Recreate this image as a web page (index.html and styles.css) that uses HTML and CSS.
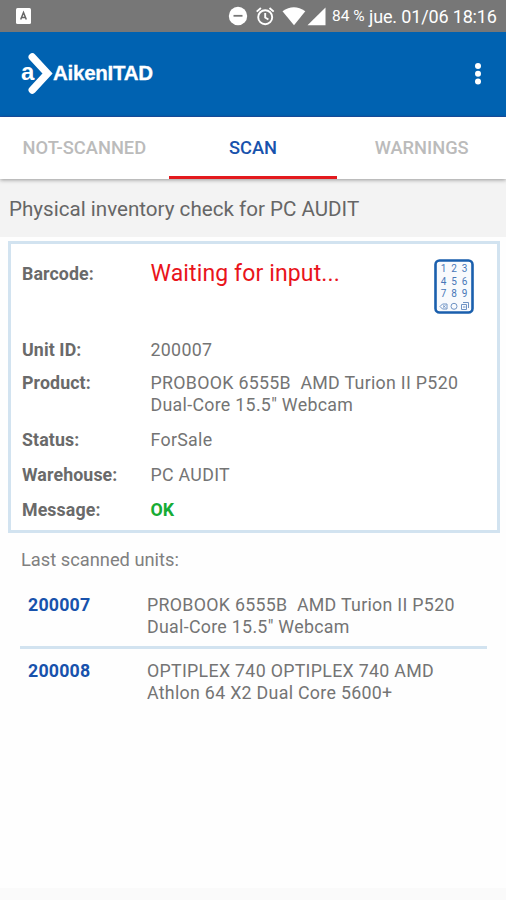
FILE: index.html
```html
<!DOCTYPE html>
<html lang="en">
<head>
<meta charset="utf-8">
<title>AikenITAD</title>
<link rel="stylesheet" href="styles.css">
</head>
<body>
<div class="status">
  <svg class="status-app" width="15" height="16" viewBox="0 0 15 16"><rect width="15" height="16" rx="1.5" fill="#fff"/><path d="M4.7 11.5 7.5 4.5l2.800 7M5.700 9.400h3.600" fill="none" stroke="#666" stroke-width="1.500"/></svg>
  <svg class="status-icons" width="102" height="22" viewBox="0 0 102 22">
    <circle cx="10" cy="11" r="9.2" fill="#fff"/><path d="M5.5 10.8h9" stroke="#777" stroke-width="1.8"/>
    <g fill="none" stroke="#fff" stroke-width="1.9"><circle cx="37.2" cy="12.2" r="7"/><path d="M37.2 8v4.5l3.2 2M28.7 6.6l4.2-3.6M45.7 6.6 41.500 3"/></g>
    <path d="M54.500 6.200Q65.800-1.500 77.300 6.200L66 20.200z" fill="#fff"/>
    <path d="M97.500 2.500v17.700H79.500z" fill="#fff"/>
  </svg>
  <span class="battery">84 %</span><span class="clock">jue. 01/06 18:16</span>
</div>
<header class="appbar">
  <div class="logo">
    <span class="logo-a">a</span>
    <svg class="logo-arrow" width="26" height="42" viewBox="0 0 26 42"><path d="M4.300 4 19.500 20.500 4.300 37" fill="none" stroke="#fff" stroke-width="7.500" stroke-linecap="round"/></svg>
    <span class="logo-name">AikenITAD</span>
  </div>
  <svg class="more" width="8" height="24" viewBox="0 0 8 24" fill="#fff"><circle cx="4" cy="4" r="3"/><circle cx="4" cy="11.700" r="3"/><circle cx="4" cy="19.400" r="3"/></svg>
</header>
<nav class="tabs">
  <div class="tab">NOT-SCANNED</div>
  <div class="tab active">SCAN</div>
  <div class="tab">WARNINGS</div>
</nav>
<h1 class="title"><span>Physical inventory check for PC AUDIT</span></h1>
<main>
  <section class="card">
    <div class="row barcode"><b>Barcode:</b><span class="waiting">Waiting for input...</span>
      <svg class="keypad" width="40" height="55" viewBox="0 0 40 55">
        <rect x="1.500" y="1.500" width="37" height="52" rx="4" fill="#f8fafd" stroke="#1a5fad" stroke-width="2.600"/>
        <g class="keys"><text x="9.500" y="13">1</text><text x="20" y="13">2</text><text x="30.500" y="13">3</text><text x="9.500" y="25.500">4</text><text x="20" y="25.500">5</text><text x="30.500" y="25.500">6</text><text x="9.500" y="38">7</text><text x="20" y="38">8</text><text x="30.500" y="38">9</text></g>
        <g fill="none" stroke="#6f93c4"><path d="m6 47.500 2.500-2.500H13v5H8.500zM9 46.500l2.500 2m0-2-2.500 2"/><circle cx="20" cy="47.300" r="3"/><path d="M27.500 45.500h5v5h-5zM29 43.500h5.500V49M29 48h2.500"/></g>
      </svg>
    </div>
    <div class="row unit"><b>Unit ID:</b><span>200007</span></div>
    <div class="row product"><b>Product:</b><span>PROBOOK 6555B&nbsp; AMD Turion II P520<br>Dual-Core 15.5" Webcam</span></div>
    <div class="row"><b>Status:</b><span>ForSale</span></div>
    <div class="row"><b>Warehouse:</b><span>PC AUDIT</span></div>
    <div class="row"><b>Message:</b><span class="ok">OK</span></div>
  </section>
  <section class="history">
    <h2 class="history-title">Last scanned units:</h2>
    <div class="scan"><b>200007</b><span>PROBOOK 6555B&nbsp; AMD Turion II P520<br>Dual-Core 15.5" Webcam</span></div>
    <div class="scan"><b>200008</b><span>OPTIPLEX 740 OPTIPLEX 740 AMD<br>Athlon 64 X2 Dual Core 5600+</span></div>
  </section>
</main>
<footer class="bottom"></footer>
</body>
</html>
```
FILE: styles.css
```css
* { box-sizing: border-box; }
body {
  margin: 0;
  height: 900px;
  display: flex;
  flex-direction: column;
  background: #fefefe;
  font: 17.8px/22px Roboto, sans-serif;
  color: #747474;
  white-space: nowrap;
  overflow: hidden;
}
.status {
  height: 32px;
  flex: none;
  display: flex;
  align-items: center;
  padding: 0 9px 0 16px;
  background: #777;
  color: #fff;
}
.status-icons { margin-left: auto; }
.battery { width: 34px; margin-left: 2px; font-size: 15.5px; }
.clock { width: 128px; margin-left: 3px; font-size: 18px; letter-spacing: -0.15px; padding-top: 1px; }
.appbar {
  height: 85px;
  flex: none;
  display: flex;
  align-items: center;
  justify-content: space-between;
  padding: 0 24px 0 21px;
  background: #0062b1;
  border-bottom: 1px solid #1a52a8;
  color: #fff;
}
.logo {
  display: flex;
  align-items: center;
  font-family: "Liberation Sans", sans-serif;
  font-weight: bold;
}
.logo-a { width: 7px; font-size: 24px; margin-top: -4px; }
.logo-arrow { flex: none; }
.logo-name { margin-left: -1px; font-size: 20.5px; letter-spacing: -0.25px; margin-top: -2px; -webkit-text-stroke: 0.3px #fff; }
.tabs {
  position: relative;
  display: grid;
  grid-template-columns: repeat(3, 1fr);
  height: 62px;
  flex: none;
  background: #fff;
  box-shadow: 0 1px 4px rgba(0, 0, 0, 0.38);
}
.tab {
  padding-top: 20px;
  text-align: center;
  font-size: 18.3px;
  font-weight: 500;
  color: #bbb;
}
.tab.active { color: #1852ac; border-bottom: 3px solid #e3191e; }
.title {
  margin: 0;
  height: 58px;
  flex: none;
  padding: 19px 9px 0;
  background: #f3f3f3;
  font-size: 20.6px;
  font-weight: 400;
  color: #666;
}
main { flex: 1; padding: 4px 6px 0 8px; }
.card {
  display: flex;
  flex-direction: column;
  gap: 13px;
  height: 292px;
  padding: 17px 23px 0 11px;
  border: 3px solid #d2e3f0;
  background: #fff;
}
.row { display: grid; grid-template-columns: 128.500px 1fr auto; letter-spacing: 0.3px; }
.row b { font-weight: 700; letter-spacing: 0.1px; color: #6a6a6a; }
.barcode { height: 58px; padding-top: 2px; margin-bottom: 7px; }
.row .waiting { font-size: 23px; color: #e9141b; letter-spacing: 0.13px; }
.keypad { margin-top: -4px; }
.keys text { font: 400 10px Roboto, sans-serif; fill: #4777b8; text-anchor: middle; letter-spacing: 0; }
.unit { margin-bottom: -2px; }
.row .ok { font-weight: 700; letter-spacing: 0; color: #16ac35; }
.history { padding: 16px 13px 0 12px; }
.history-title { margin: 0 0 23px 1px; font-size: 18.3px; font-weight: 400; line-height: 22px; color: #808080; }
.scan { display: grid; grid-template-columns: 119px 1fr; padding: 0 8px 8px; letter-spacing: 0.3px; }
.scan b { font-weight: 700; color: #1852ac; letter-spacing: 0.2px; }
.scan + .scan { border-top: 3px solid #d2e3f0; padding-top: 11px; }
.bottom { height: 12px; flex: none; background: #fafafa; }
```
